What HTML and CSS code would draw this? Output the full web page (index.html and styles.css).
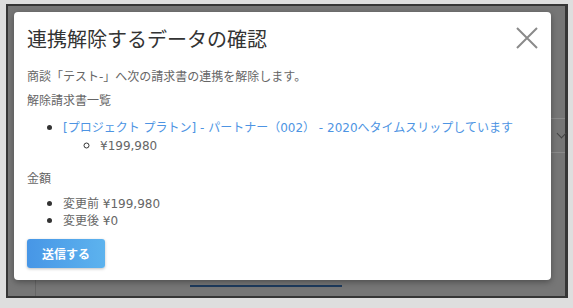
FILE: index.html
```html
<!DOCTYPE html>
<html lang="ja">
<head>
<meta charset="utf-8">
<link rel="stylesheet" href="styles.css">
</head>
<body>
<div class="frame">
  <div class="bg-vline"></div>
  <div class="bg-hline bg-h1"></div>
  <div class="bg-hline bg-h2"></div>
  <div class="bg-chevron"></div>
  <div class="bg-blue"></div>
  <div class="modal">
    <div class="modal-head">
      <h1 class="title">連携解除するデータの確認</h1>
      <svg class="close" width="22" height="22" viewBox="0 0 22 22"><path d="M1 1L21 21M21 1L1 21" stroke="#8a8a8a" stroke-width="2" fill="none"/></svg>
    </div>
    <p class="text">商談「テスト-」へ次の請求書の連携を解除します。</p>
    <p class="text">解除請求書一覧</p>
    <ul class="list">
      <li><a class="link" href="#">[プロジェクト プラトン] - パートナー（002） - 2020へタイムスリップしています</a>
        <ul class="sublist"><li>¥199,980</li></ul>
      </li>
    </ul>
    <p class="text label">金額</p>
    <ul class="list list2">
      <li>変更前 ¥199,980</li>
      <li>変更後 ¥0</li>
    </ul>
    <button class="submit">送信する</button>
  </div>
</div>
</body>
</html>
```

FILE: styles.css
```css
html, body {
  margin: 0;
  padding: 0;
  background: #dedede;
  width: 573px;
  height: 308px;
  overflow: hidden;
  font-family: "Noto Sans CJK JP", "Noto Sans", sans-serif;
}
.frame {
  position: relative;
  box-sizing: border-box;
  margin: 4px 0 0 6px;
  width: 562px;
  height: 294px;
  border-style: solid;
  border-color: #363636;
  border-width: 2px 3px 2px 2px;
  background: #767676;
  padding: 6px;
}
.bg-vline {
  position: absolute;
  left: 27px;
  top: 270px;
  width: 1px;
  height: 20px;
  background: #666;
}
.bg-hline {
  position: absolute;
  left: 543px;
  width: 14px;
  height: 1px;
  background: #8a8a8a;
}
.bg-h1 { top: 112px; }
.bg-h2 { top: 146px; }
.bg-chevron {
  position: absolute;
  left: 550px;
  top: 124px;
  width: 6px;
  height: 6px;
  border-right: 1.5px solid #444;
  border-bottom: 1.5px solid #444;
  transform: rotate(45deg);
}
.bg-blue {
  position: absolute;
  left: 182px;
  top: 279px;
  width: 152px;
  height: 2px;
  background: #1e3a5c;
}
.modal {
  position: relative;
  box-sizing: border-box;
  width: 537px;
  height: 268px;
  background: #fff;
  border-radius: 4px;
  box-shadow: 0 2px 6px rgba(0,0,0,0.35);
  padding: 13px 13px 0 13px;
  color: #666;
  font-family: "DejaVu Sans", "Noto Sans CJK JP", sans-serif;
  font-size: 12px;
  line-height: 18px;
}
.modal-head {
  display: flex;
  justify-content: space-between;
  align-items: flex-start;
}
.title {
  margin: 0;
  font-family: "Noto Sans CJK JP", sans-serif;
  font-size: 20px;
  line-height: 28px;
  font-weight: 400;
  color: #333;
}
.close {
  margin: 2px 0 0 0;
}
.text {
  margin: 15px 0 0 0;
}
.text + .text { margin-top: 6px; }
.list {
  margin: 9px 0 0 0;
  padding-left: 36px;
  list-style: disc;
}
.list li::marker {
  font: 12px/10px "Noto Sans CJK JP", sans-serif;
  color: #333;
}
.sublist {
  margin: 0;
  padding-left: 37px;
  list-style: circle;
}
.link {
  color: #4d94e3;
  text-decoration: none;
}
.label { margin-top: 15px; }
.list2 { margin-top: 7px; }
.list2 li + li { margin-top: -1px; }
.submit {
  margin-top: 9px;
  width: 78px;
  height: 29px;
  border: none;
  border-radius: 3px;
  background: linear-gradient(90deg, #4796e6, #5db3ee);
  color: #fff;
  font-family: "Noto Sans CJK JP", sans-serif;
  font-weight: bold;
  font-size: 12px;
  box-shadow: 0 1px 3px rgba(0,0,0,0.25);
  padding: 0;
}
```
